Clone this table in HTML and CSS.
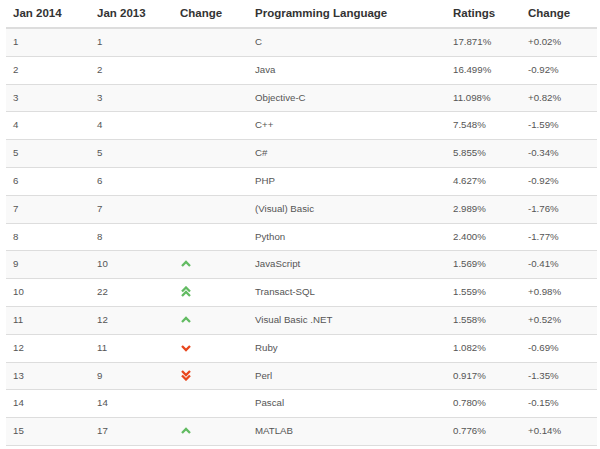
FILE: index.html
```html
<!DOCTYPE html>
<html>
<head>
<meta charset="utf-8">
<link rel="stylesheet" href="styles.css">
</head>
<body>
<table class="ranking">
  <colgroup>
    <col class="c1"><col class="c2"><col class="c3"><col class="c4"><col class="c5"><col class="c6">
  </colgroup>
  <thead>
    <tr><th>Jan 2014</th><th>Jan 2013</th><th>Change</th><th>Programming Language</th><th>Ratings</th><th>Change</th></tr>
  </thead>
  <tbody>
    <tr><td>1</td><td>1</td><td></td><td>C</td><td>17.871%</td><td>+0.02%</td></tr>
    <tr><td>2</td><td>2</td><td></td><td>Java</td><td>16.499%</td><td>-0.92%</td></tr>
    <tr><td>3</td><td>3</td><td></td><td>Objective-C</td><td>11.098%</td><td>+0.82%</td></tr>
    <tr><td>4</td><td>4</td><td></td><td>C++</td><td>7.548%</td><td>-1.59%</td></tr>
    <tr><td>5</td><td>5</td><td></td><td>C#</td><td>5.855%</td><td>-0.34%</td></tr>
    <tr><td>6</td><td>6</td><td></td><td>PHP</td><td>4.627%</td><td>-0.92%</td></tr>
    <tr><td>7</td><td>7</td><td></td><td>(Visual) Basic</td><td>2.989%</td><td>-1.76%</td></tr>
    <tr><td>8</td><td>8</td><td></td><td>Python</td><td>2.400%</td><td>-1.77%</td></tr>
    <tr><td>9</td><td>10</td><td><svg class="ico up" width="10" height="7" viewBox="0 0 10 7"><polyline points="1,6 5,2 9,6"/></svg></td><td>JavaScript</td><td>1.569%</td><td>-0.41%</td></tr>
    <tr><td>10</td><td>22</td><td><svg class="ico up" width="10" height="11" viewBox="0 0 10 11"><polyline points="1,5.5 5,1.5 9,5.5"/><polyline points="1,10 5,6 9,10"/></svg></td><td>Transact-SQL</td><td>1.559%</td><td>+0.98%</td></tr>
    <tr><td>11</td><td>12</td><td><svg class="ico up" width="10" height="7" viewBox="0 0 10 7"><polyline points="1,6 5,2 9,6"/></svg></td><td>Visual Basic .NET</td><td>1.558%</td><td>+0.52%</td></tr>
    <tr><td>12</td><td>11</td><td><svg class="ico down" width="10" height="7" viewBox="0 0 10 7"><polyline points="1,1 5,5 9,1"/></svg></td><td>Ruby</td><td>1.082%</td><td>-0.69%</td></tr>
    <tr><td>13</td><td>9</td><td><svg class="ico down" width="10" height="11" viewBox="0 0 10 11"><polyline points="1,1 5,5 9,1"/><polyline points="1,5.5 5,9.5 9,5.5"/></svg></td><td>Perl</td><td>0.917%</td><td>-1.35%</td></tr>
    <tr><td>14</td><td>14</td><td></td><td>Pascal</td><td>0.780%</td><td>-0.15%</td></tr>
    <tr><td>15</td><td>17</td><td><svg class="ico up" width="10" height="7" viewBox="0 0 10 7"><polyline points="1,6 5,2 9,6"/></svg></td><td>MATLAB</td><td>0.776%</td><td>+0.14%</td></tr>
  </tbody>
</table>
</body>
</html>
```
FILE: styles.css
```css
html, body {
  margin: 0;
  padding: 0;
  background: #fff;
}
.ranking {
  margin-left: 6px;
  width: 591px;
  border-collapse: separate;
  border-spacing: 0;
  table-layout: fixed;
  font-family: "Liberation Sans", Arial, sans-serif;
}
.c1 { width: 84px; }
.c2 { width: 83px; }
.c3 { width: 75px; }
.c4 { width: 198px; }
.c5 { width: 75px; }
.c6 { width: 76px; }
.ranking th {
  text-align: left;
  font-weight: bold;
  font-size: 11.5px;
  color: #333;
  height: 27px;
  line-height: 27px;
  padding: 0 0 0 7px;
  border-bottom: 2px solid #ddd;
  white-space: nowrap;
  vertical-align: middle;
}
.ranking td {
  font-size: 9.7px;
  color: #555;
  height: 26.8px;
  line-height: 26.8px;
  padding: 0 0 0 7px;
  border-bottom: 1px solid #ddd;
  vertical-align: middle;
  white-space: nowrap;
}
.ranking tbody tr:nth-child(odd) td {
  background: #f9f9f9;
}
.ico {
  display: block;
  margin-left: 1px;
  fill: none;
  stroke-width: 2.3;
  stroke-linecap: butt;
  stroke-linejoin: miter;
}
.ico.up { stroke: #62bb62; margin-top: -2px; }
.ico.down { stroke: #e8461c; }
```
